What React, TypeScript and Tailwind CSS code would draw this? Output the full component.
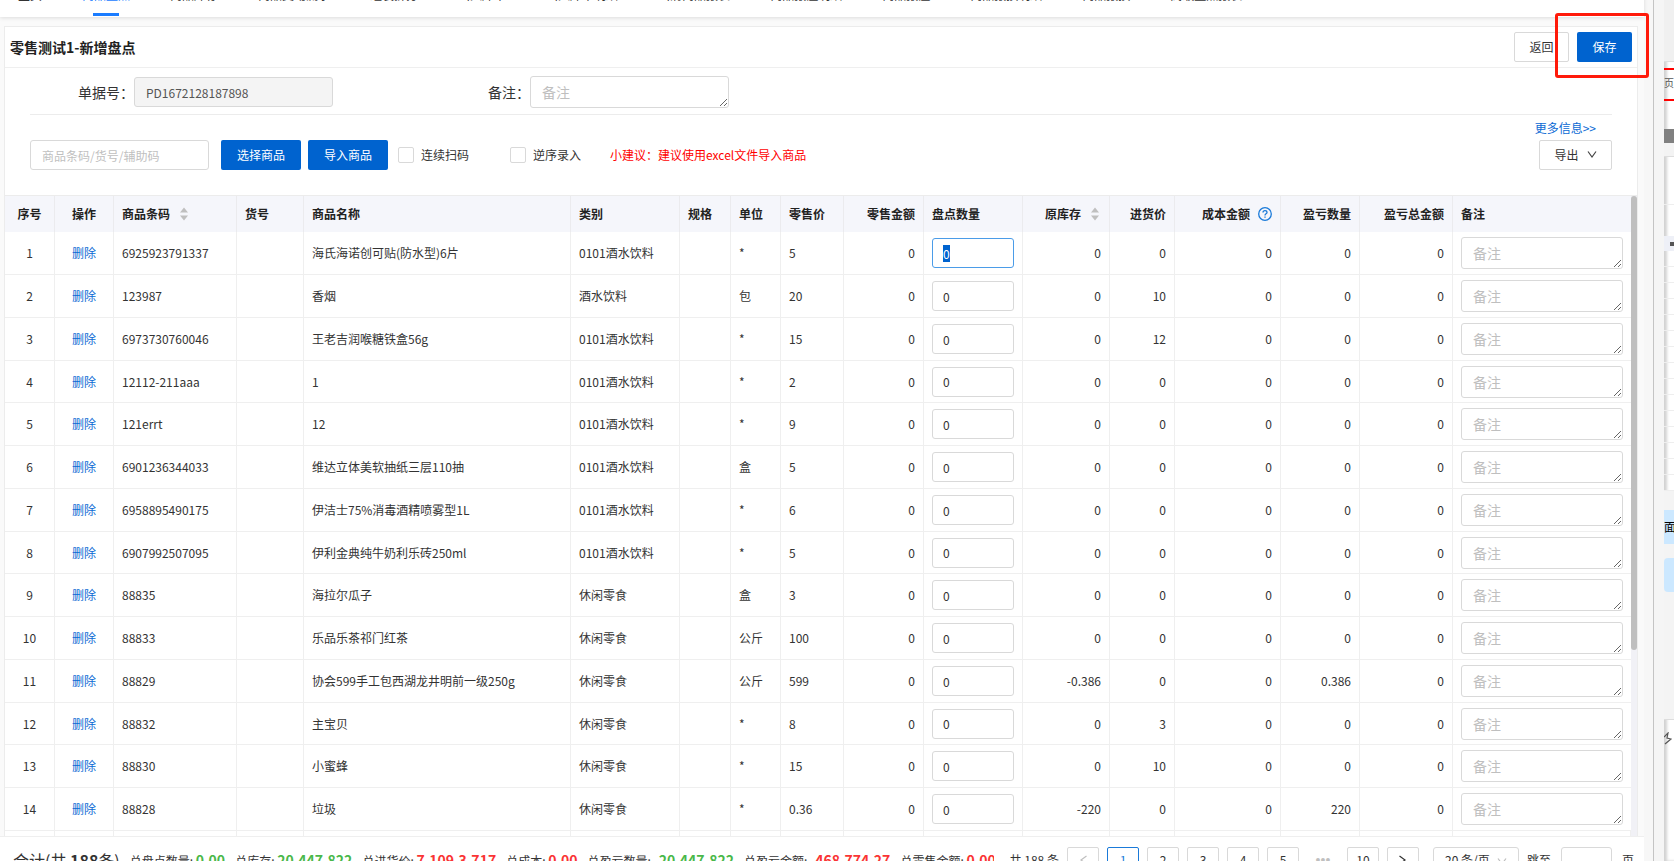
import React, { useEffect, useRef } from 'react'
import clsx from 'clsx'

const tabs = [
  '主页', '商品盘点', '商品库存', '商品变动流水', '组装拆分', '出入库单', '出入库单明细',
  '出清商品报表', '商品报溢明细', '商品报溢', '商品报损明细', '商品报损', '高级盘点报表',
]

type Column = { title: string; width?: number; align?: 'center' | 'right'; sort?: boolean; help?: boolean }

const columns: Column[] = [
  { title: '序号', width: 50, align: 'center' },
  { title: '操作', width: 59, align: 'center' },
  { title: '商品条码', width: 123, sort: true },
  { title: '货号', width: 67 },
  { title: '商品名称', width: 267 },
  { title: '类别', width: 109 },
  { title: '规格', width: 51 },
  { title: '单位', width: 50 },
  { title: '零售价', width: 63 },
  { title: '零售金额', width: 80, align: 'right' },
  { title: '盘点数量', width: 99 },
  { title: '原库存', width: 87, align: 'right', sort: true },
  { title: '进货价', width: 65, align: 'right' },
  { title: '成本金额', width: 106, align: 'right', help: true },
  { title: '盈亏数量', width: 79, align: 'right' },
  { title: '盈亏总金额', width: 93, align: 'right' },
  { title: '备注' },
]

// code, name, category, unit, price, stock, cost, difference
const goods = [
  ['6925923791337', '海氏海诺创可贴(防水型)6片', '0101酒水饮料', '*', '5', '0', '0', '0'],
  ['123987', '香烟', '酒水饮料', '包', '20', '0', '10', '0'],
  ['6973730760046', '王老吉润喉糖铁盒56g', '0101酒水饮料', '*', '15', '0', '12', '0'],
  ['12112-211aaa', '1', '0101酒水饮料', '*', '2', '0', '0', '0'],
  ['121errt', '12', '0101酒水饮料', '*', '9', '0', '0', '0'],
  ['6901236344033', '维达立体美软抽纸三层110抽', '0101酒水饮料', '盒', '5', '0', '0', '0'],
  ['6958895490175', '伊洁士75%消毒酒精喷雾型1L', '0101酒水饮料', '*', '6', '0', '0', '0'],
  ['6907992507095', '伊利金典纯牛奶利乐砖250ml', '0101酒水饮料', '*', '5', '0', '0', '0'],
  ['88835', '海拉尔瓜子', '休闲零食', '盒', '3', '0', '0', '0'],
  ['88833', '乐品乐茶祁门红茶', '休闲零食', '公斤', '100', '0', '0', '0'],
  ['88829', '协会599手工包西湖龙井明前一级250g', '休闲零食', '公斤', '599', '-0.386', '0', '0.386'],
  ['88832', '主宝贝', '休闲零食', '*', '8', '0', '3', '0'],
  ['88830', '小蜜蜂', '休闲零食', '*', '15', '0', '10', '0'],
  ['88828', '垃圾', '休闲零食', '*', '0.36', '-220', '0', '220'],
]

const totals = [
  ['总盘点数量:', '0.00', 'green'],
  ['总库存:', '20,447,822', 'green'],
  ['总进货价:', '7,109.3,717', 'red'],
  ['总成本:', '0.00', 'red'],
  ['总盈亏数量:', '-20,447,822', 'green'],
  ['总盈亏金额:', '-468,774.27', 'red'],
  ['总零售金额:', '0.00', 'red'],
]

const Sorter = () => (
  <svg width="12" height="14" viewBox="0 0 12 14" fill="#bfbfbf" className="shrink-0">
    <path d="M6 0.5 10 5.5H2zM6 13.5 10 8.5H2z" />
  </svg>
)

const Help = () => (
  <svg width="14" height="14" viewBox="0 0 14 14" fill="none" stroke="#1a7ad9" strokeWidth="1.3" className="shrink-0">
    <circle cx="7" cy="7" r="6.3" />
    <path d="M5 5.6C5 4.3 5.8 3.6 7 3.6s2 .7 2 1.8c0 1.4-2 1.5-2 3" />
    <path d="M7 9.6v1.2" />
  </svg>
)

const Chevron = ({ className }: { className: string }) => (
  <svg width="10" height="10" viewBox="0 0 10 10" fill="none" stroke="currentColor" strokeWidth="1.2" className={className}>
    <path d="M1 1.5 5 7 9 1.5" />
  </svg>
)

const field = 'rounded-[3px] border border-[#d9d9d9] bg-white outline-none placeholder:text-[#bfbfbf]'

const PageTabs = () => (
  <nav className="z-10 -mt-[23px] flex h-10 shrink-0 items-center gap-10 whitespace-nowrap bg-white pl-[18px] shadow-[0_1px_4px_rgba(0,0,0,0.12)]">
    {tabs.map((tab) => (
      <a
        key={tab}
        href="#"
        className={clsx('relative flex h-10 items-center pb-1', tab === '商品盘点' ? 'text-[#1a7cff]' : 'text-[#333]')}
      >
        {tab}
        {tab === '商品盘点' && <span className="absolute bottom-px left-1/2 h-[3px] w-[26px] -translate-x-1/2 bg-[#1a7cff]" />}
      </a>
    ))}
  </nav>
)

const TitleBar = () => (
  <div className="flex h-[41px] shrink-0 items-center border-b border-[#efefef] px-[5px]">
    <h1 className="flex-1 text-sm font-bold text-[#222]">零售测试1-新增盘点</h1>
    <button className="h-[30px] w-[55px] rounded-[2px] border border-[#d9d9d9] bg-white">返回</button>
    <div className="relative ml-2">
      <button className="h-[30px] w-[55px] rounded-[2px] bg-[#0063cf] text-white">保存</button>
      <span className="pointer-events-none absolute -bottom-4 -left-[22px] -right-[17px] -top-[19px] z-20 rounded-[3px] border-[3px] border-[#ff1a0a]" />
    </div>
  </div>
)

const DocForm = () => (
  <div className="mx-[25px] flex h-[47px] shrink-0 items-center border-b border-[#ececec] pt-0.5 text-sm">
    <label htmlFor="docNo" className="w-[104px] text-right">单据号：</label>
    <input id="docNo" readOnly value="PD1672128187898" className="h-[30px] w-[199px] rounded-[3px] border border-[#d9d9d9] bg-[#f4f4f4] px-[11px] text-xs text-[#555] outline-none" />
    <label htmlFor="docRemark" className="ml-[133px] w-[64px] text-right">备注：</label>
    <textarea id="docRemark" placeholder="备注" className={clsx(field, 'h-8 w-[199px] overflow-hidden px-[11px] py-1 leading-[22px]')} />
  </div>
)

const Toolbar = () => (
  <div className="mx-[25px] flex h-20 shrink-0 items-start">
    <div className="flex flex-1 items-center pt-[25px]">
      <input aria-label="商品条码" placeholder="商品条码/货号/辅助码" className={clsx(field, 'h-[30px] w-[179px] px-[11px]')} />
      <button className="ml-3 h-[30px] w-20 rounded-[2px] bg-[#0063cf] text-white">选择商品</button>
      <button className="ml-[7px] h-[30px] w-20 rounded-[2px] bg-[#0063cf] text-white">导入商品</button>
      <label className="ml-2.5 flex items-center gap-[7px]">
        <input type="checkbox" className="size-4 appearance-none rounded-[2px] border border-[#d9d9d9] bg-white" />
        连续扫码
      </label>
      <label className="ml-[41px] flex items-center gap-[7px]">
        <input type="checkbox" className="size-4 appearance-none rounded-[2px] border border-[#d9d9d9] bg-white" />
        逆序录入
      </label>
      <span className="ml-[29px] text-[#f00]">小建议：建议使用excel文件导入商品</span>
    </div>
    <div className="flex flex-col items-end pt-[3px]">
      <a href="#" className="mr-4 h-[22px] leading-5 text-[#0b6ad4]">更多信息&gt;&gt;</a>
      <button className="flex h-[30px] w-[73px] items-center justify-center gap-2 rounded-[2px] border border-[#d9d9d9] bg-white">
        导出
        <Chevron className="text-[#444]" />
      </button>
    </div>
  </div>
)

const GoodsTable = () => {
  const first = useRef<HTMLInputElement>(null)

  useEffect(() => {
    first.current?.focus()
    first.current?.select()
  }, [])

  const cell = 'border-b border-r border-[#efefef] px-2 py-0'

  return (
    <div className="flex min-h-0 flex-1 items-start overflow-hidden border-t border-[#ececec]">
      <table className="min-w-0 flex-1 table-fixed border-separate border-spacing-0">
        <colgroup>
          {columns.map((col) => (
            <col key={col.title} style={{ width: col.width }} />
          ))}
        </colgroup>
        <thead>
          <tr className="bg-[#f5f6fb] text-[#222]">
            {columns.map((col, i) => (
              <th key={col.title} className={clsx('h-9 px-2 py-0 font-bold', i < 16 && 'border-r border-[#ebebee]')}>
                <div
                  className={clsx(
                    'flex items-center gap-2 whitespace-nowrap',
                    col.align === 'center' && 'justify-center',
                    col.align === 'right' && 'justify-end',
                  )}
                >
                  {col.title}
                  {col.sort && <Sorter />}
                  {col.help && <Help />}
                </div>
              </th>
            ))}
          </tr>
        </thead>
        <tbody>
          {goods.map(([code, name, category, unit, price, stock, cost, diff], i) => (
            <tr key={code} className="h-[43px] nth-[4n]:h-[42px]">
              <td className={clsx(cell, 'text-center')}>{i + 1}</td>
              <td className={clsx(cell, 'text-center')}>
                <a href="#" className="text-[#0b6ad4]">删除</a>
              </td>
              <td className={cell}>{code}</td>
              <td className={cell}></td>
              <td className={cell}>{name}</td>
              <td className={cell}>{category}</td>
              <td className={cell}></td>
              <td className={cell}>{unit}</td>
              <td className={cell}>{price}</td>
              <td className={clsx(cell, 'text-right')}>0</td>
              <td className={cell}>
                <input
                  ref={i === 0 ? first : undefined}
                  aria-label="盘点数量"
                  defaultValue="0"
                  className={clsx(field, 'block h-[30px] w-full px-[10px] selection:bg-[#0063cf] selection:text-white focus:border-[#4b9ce8]')}
                />
              </td>
              <td className={clsx(cell, 'text-right')}>{stock}</td>
              <td className={clsx(cell, 'text-right')}>{cost}</td>
              <td className={clsx(cell, 'text-right')}>0</td>
              <td className={clsx(cell, 'text-right')}>{diff}</td>
              <td className={clsx(cell, 'text-right')}>0</td>
              <td className="border-b border-[#efefef] px-2 py-0">
                <textarea aria-label="备注" placeholder="备注" className={clsx(field, 'block h-8 w-full overflow-hidden px-[11px] py-1 text-sm leading-[22px]')} />
              </td>
            </tr>
          ))}
          <tr className="h-[43px]">
            {columns.map((col) => (
              <td key={col.title} className={cell}></td>
            ))}
          </tr>
        </tbody>
      </table>
      <div className="h-full w-1.5 shrink-0 bg-[#f1f1f6]">
        <div className="h-[71%] rounded-full bg-[#bfbfbf]"></div>
      </div>
    </div>
  )
}

const pageButton = 'h-[30px] w-8 rounded-[2px] border border-[#d9d9d9] bg-white pb-1'

const Footer = () => (
  <footer className="-mb-[25px] flex h-[50px] shrink-0 items-center whitespace-nowrap border-t border-[#efefef] bg-white pl-[13px] pr-2.5">
    <div className="flex min-w-0 flex-1 items-center gap-2.5 overflow-hidden pb-1">
      <span className="shrink-0 text-base">
        合计(共 <b>188</b>条)
      </span>
      {totals.map(([label, value, color]) => (
        <span key={label} className="shrink-0">
          {label} <b className={clsx('text-sm', color === 'green' ? 'text-[#4ab84a]' : 'text-[#fa3434]')}>{value}</b>
        </span>
      ))}
    </div>
    <div className="ml-4 flex items-center gap-2">
      <span className="pb-1">共 188 条</span>
      <button aria-label="上一页" className={clsx(pageButton, 'flex items-center justify-center text-[#bfbfbf]')}>
        <Chevron className="rotate-90" />
      </button>
      {['1', '2', '3', '4', '5'].map((page) => (
        <button key={page} className={clsx(pageButton, page === '1' && 'border-[#1a7ad9]! text-[#1a7ad9]')}>
          {page}
        </button>
      ))}
      <span className="w-8 pb-1 text-center font-['Liberation_Sans',sans-serif] text-sm text-[#bfbfbf]">•••</span>
      <button className={pageButton}>10</button>
      <button aria-label="下一页" className={clsx(pageButton, 'flex items-center justify-center')}>
        <Chevron className="-rotate-90" />
      </button>
      <div className="relative ml-1.5">
        <select aria-label="每页条数" className={clsx(field, 'h-[30px] w-[86px] appearance-none px-[11px] pb-1')}>
          <option>20 条/页</option>
        </select>
        <Chevron className="pointer-events-none absolute right-3 top-2.5 text-[#bfbfbf]" />
      </div>
      <label htmlFor="jump" className="pb-1">跳至</label>
      <input id="jump" className={clsx(field, 'mr-0.5 ml-0.5 h-[30px] w-[51px] px-2')} />
      <span className="pb-1">页</span>
    </div>
  </footer>
)

// strip of the window that sits behind this one
const BackWindow = () => (
  <aside className="flex w-2.5 shrink-0 flex-col overflow-hidden whitespace-nowrap bg-white text-[10px] shadow-[inset_3px_0_3px_rgba(0,0,0,0.18)]">
    <div className="h-[62px] shrink-0 border-b border-[#ddd] bg-[#f0f0f0]"></div>
    <div className="mt-1.5 flex h-[33px] shrink-0 items-center border-y-2 border-[#f00] pb-1 text-[#555]">页</div>
    <div className="mt-7 h-[14px] shrink-0 bg-[#808080]"></div>
    <div className="h-[14px] shrink-0 border-b border-[#ddd] bg-[#f3f3f3]"></div>
    <div className="h-12 shrink-0 border-b border-[#eee]"></div>
    <div className="mt-[31px] flex h-[15px] shrink-0 items-center justify-end bg-[#eef0f7]">
      <span className="size-1 bg-[#555]"></span>
    </div>
    {Array.from({ length: 15 }, (_, i) => (
      <div key={i} className="h-4 shrink-0 border-b border-[#eee]"></div>
    ))}
    <div className="h-[229px] shrink-0 border-b border-[#ddd] bg-[#f4f4f4] pt-[19px]">
      <div className="flex h-[34px] items-center bg-[#cce8ff] text-xs text-black">面</div>
      <div className="mt-3.5 h-[34px] rounded-l bg-[#cce8ff]"></div>
    </div>
    <svg width="8" height="14" viewBox="0 0 8 14" fill="none" stroke="#555" strokeWidth="1.2" className="mt-3 shrink-0">
      <path d="M0 5 4 1 3 6 7 7 1 12" />
    </svg>
  </aside>
)

const App = () => {
  return (
    <div className="flex h-screen overflow-hidden bg-[#f7f7f7] font-['Noto_Sans_CJK_SC',sans-serif] text-xs text-[#333]">
      <div className="flex min-w-0 flex-1 flex-col bg-white">
        <PageTabs />
        <main className="flex min-h-0 flex-1 flex-col bg-[#fafafa] pl-1 pr-1.5 pt-[9px]">
          <div className="flex min-h-0 flex-1 flex-col border-x border-t border-[#ececec] bg-white">
            <TitleBar />
            <DocForm />
            <Toolbar />
            <GoodsTable />
          </div>
        </main>
        <Footer />
      </div>
      <div className="w-2.5 shrink-0 border-r border-[#c4c4c4]"></div>
      <div className="w-2.5 shrink-0 bg-[#f5f5f5]"></div>
      <BackWindow />
    </div>
  )
}

export default App
